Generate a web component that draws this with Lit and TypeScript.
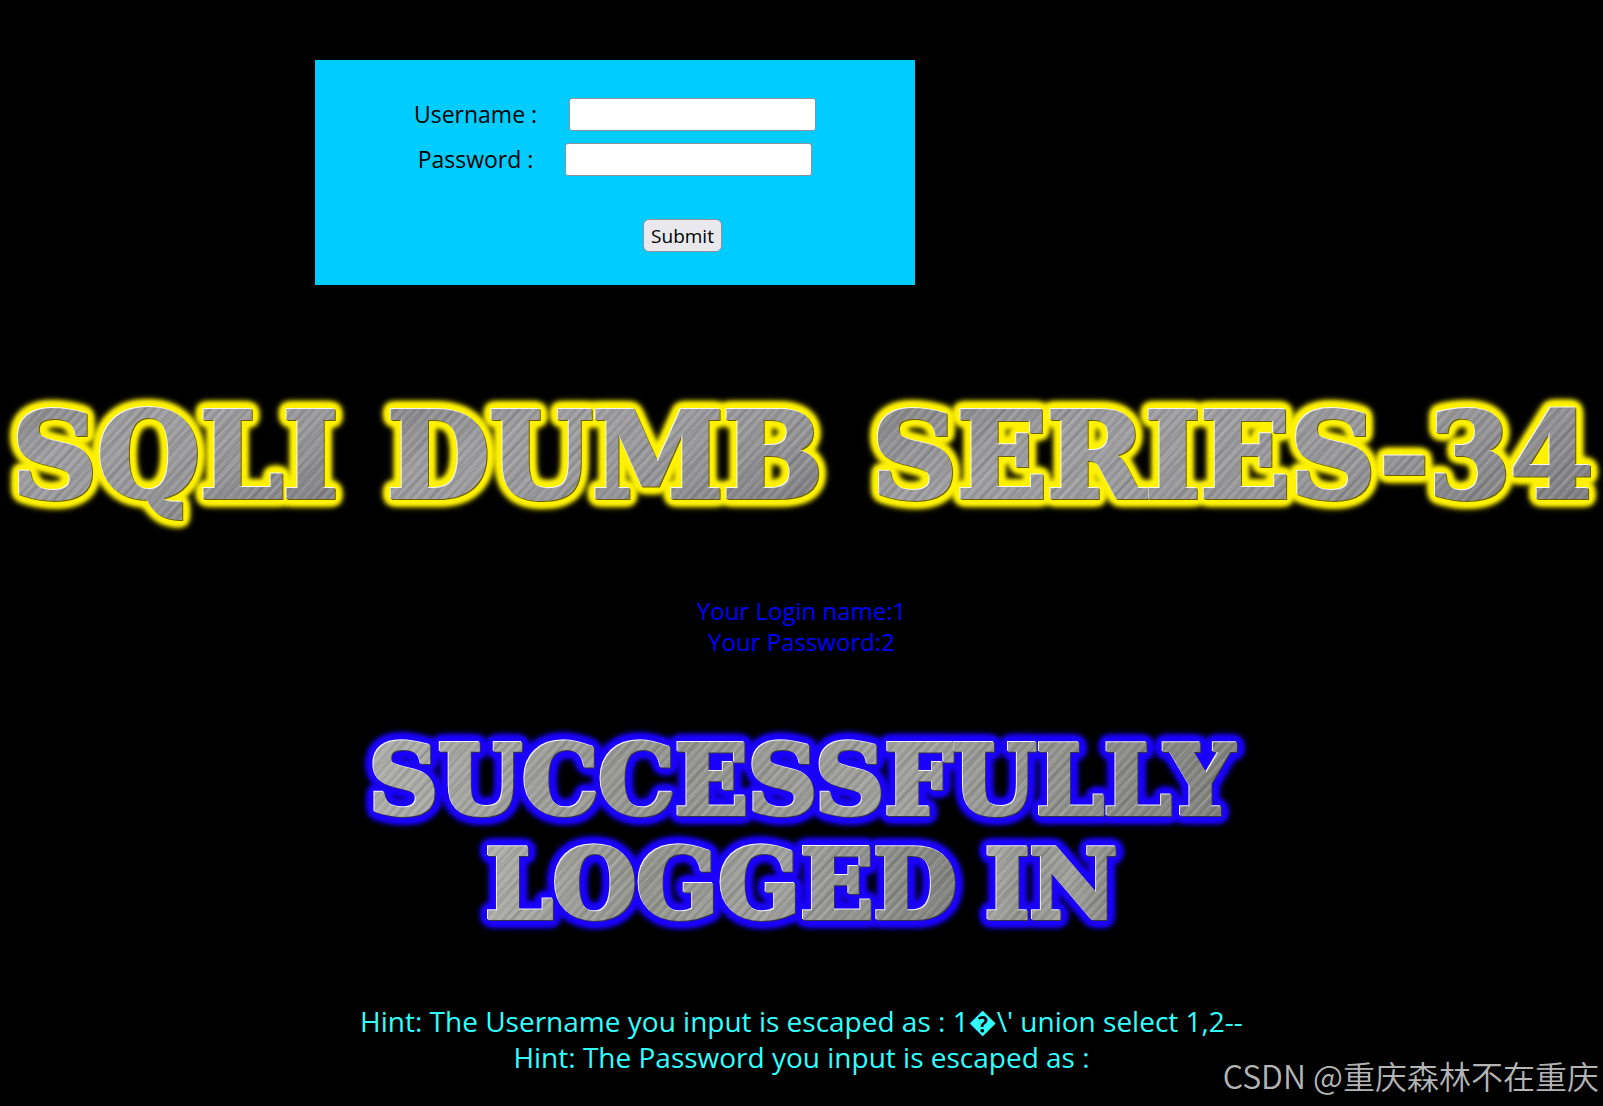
import { LitElement, html, css } from "lit";
import { customElement, property } from "lit/decorators.js";

/* Brushed-metal lettering with a coloured glow; one flex item per word. */
@customElement("metal-line")
class MetalLine extends LitElement {
  @property() text = "";

  static styles = css`
    :host {
      display: flex;
      justify-content: var(--metal-justify, center);
      gap: var(--metal-gap, 28px);
      filter: drop-shadow(-1px -1px 0 #f4f4f4) drop-shadow(1px 1px 0 var(--metal-edge))
        drop-shadow(0 0 2px var(--metal-glow)) drop-shadow(0 0 2px var(--metal-glow))
        drop-shadow(0 0 2px var(--metal-glow)) drop-shadow(0 0 2px var(--metal-glow))
        drop-shadow(0 0 2px var(--metal-glow)) drop-shadow(0 0 2px var(--metal-glow));
    }
    .word {
      padding: 0 4px 8px;
      margin: 0 -4px -8px;
      color: transparent;
      -webkit-text-stroke: 4px transparent;
      background-image: repeating-linear-gradient(
          132deg,
          rgba(255, 255, 255, 0.1) 0 1px,
          transparent 2px 3px,
          rgba(0, 0, 0, 0.08) 4px 5px,
          transparent 6px 7px
        ),
        repeating-linear-gradient(
          135deg,
          rgba(255, 255, 255, 0.1) 0 1px,
          transparent 2px 12px,
          rgba(0, 0, 0, 0.08) 13px 14px,
          transparent 15px 23px
        ),
        var(--metal-sheen);
      background-clip: text;
      -webkit-background-clip: text;
    }
  `;

  render() {
    return this.text
      .split(" ")
      .map((word) => html`<span class="word">${word}</span>`);
  }
}

@customElement("app-root")
class AppRoot extends LitElement {
  static styles = css`
    :host {
      display: block;
      position: relative;
      box-sizing: border-box;
      min-height: 100vh;
      padding-top: 60px;
      background: #000;
      font-family: "Open Sans", "Noto Sans", sans-serif;
      overflow: hidden;
    }
    .login {
      box-sizing: border-box;
      width: 600px;
      max-width: 100%;
      margin-left: 315px;
      padding: 38px 0 33px;
      background: #0cf;
      color: #000;
      font-size: 23px;
      line-height: 32px;
    }
    .row {
      display: flex;
      justify-content: center;
      gap: 32px;
      margin-bottom: 12px;
    }
    .field {
      box-sizing: border-box;
      width: 247px;
      height: 33px;
      padding: 2px 4px;
      border: 1px solid #8f8f9d;
      border-radius: 3px;
      background: #fff;
      font: inherit;
    }
    .actions {
      display: flex;
      justify-content: center;
      padding: 31px 0 0 135px;
    }
    .submit {
      box-sizing: border-box;
      height: 33px;
      padding: 1px 7px 0;
      border: 1px solid #8f8f9d;
      border-radius: 6px;
      background: #e9e9ed;
      color: #000;
      font: inherit;
      font-size: 19px;
      line-height: 30px;
    }
    .banner {
      margin: 0;
      font-family: "DejaVu Serif", serif;
      font-weight: bold;
    }
    .title {
      padding: 112px 10px 0 12px;
      font-size: 118px;
      line-height: 118px;
      --metal-justify: space-between;
      --metal-glow: #fff200;
      --metal-edge: #6b6100;
      --metal-sheen: linear-gradient(160deg, #868688, #a0a0a2 30%, #98989a 60%, #7c7c7e);
    }
    .account {
      margin: 80px 0 0;
      color: #00f;
      font-size: 24px;
      line-height: 31px;
      text-align: center;
    }
    .status {
      padding-top: 72px;
      font-size: 96px;
      line-height: 104px;
      --metal-glow: #1c00ff;
      --metal-edge: #33334d;
      --metal-sheen: linear-gradient(100deg, #b0b0ac, #94948f 35%, #a2a29e 60%, #80807c);
    }
    .hints {
      margin: 66px 0 0;
      color: #3ff;
      font-size: 28px;
      line-height: 36px;
      text-align: center;
    }
    .watermark {
      position: absolute;
      right: 4px;
      bottom: 11px;
      color: #b4b4b4;
      font-family: "Noto Sans CJK SC", sans-serif;
      font-size: 32px;
      font-weight: 350;
      line-height: 40px;
    }
  `;

  render() {
    return html`
      <form class="login" @submit=${(e: Event) => e.preventDefault()}>
        <div class="row">
          <label for="uname">Username :</label>
          <input class="field" id="uname" name="uname" type="text" />
        </div>
        <div class="row">
          <label for="passwd">Password :</label>
          <input class="field" id="passwd" name="passwd" type="password" />
        </div>
        <div class="actions">
          <button class="submit" type="submit">Submit</button>
        </div>
      </form>
      <h1 class="banner title"><metal-line text="SQLI DUMB SERIES-34"></metal-line></h1>
      <p class="account">Your Login name:1<br />Your Password:2</p>
      <h2 class="banner status">
        <metal-line text="SUCCESSFULLY"></metal-line>
        <metal-line text="LOGGED IN"></metal-line>
      </h2>
      <p class="hints">
        Hint: The Username you input is escaped as : 1\uFFFD\\' union select 1,2--<br />
        Hint: The Password you input is escaped as :
      </p>
      <div class="watermark">CSDN @重庆森林不在重庆</div>
    `;
  }
}
